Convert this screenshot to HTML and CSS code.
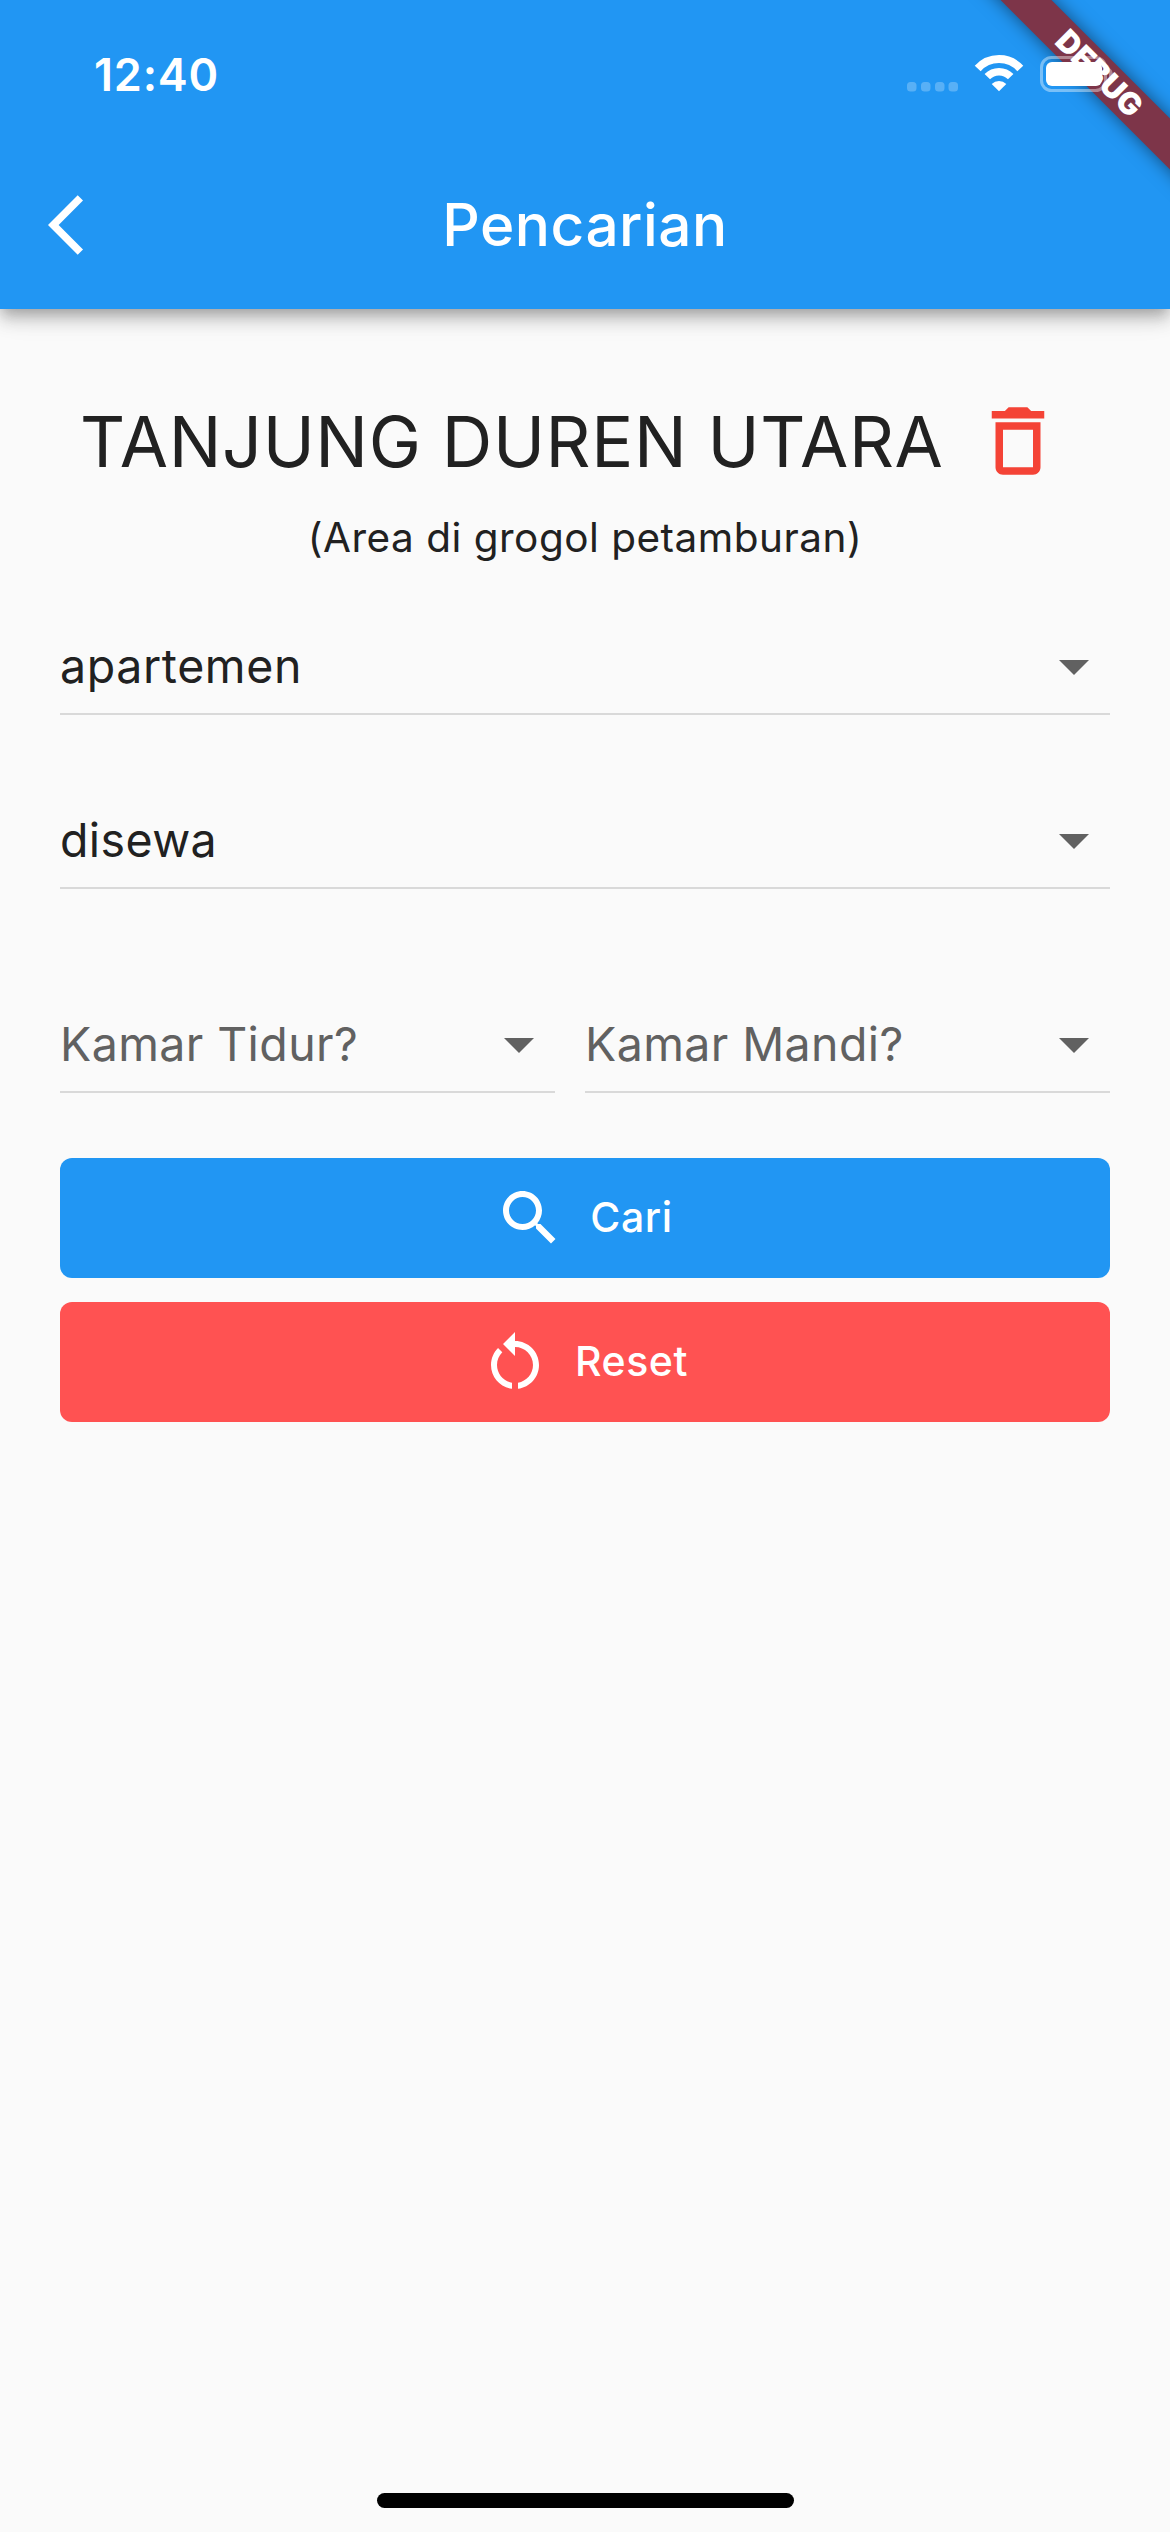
FILE: index.html
```
<!DOCTYPE html>
<html lang="id">
<head>
    <meta charset="UTF-8">
    <meta name="viewport" content="width=device-width, initial-scale=1.0">
    <title>Pencarian</title>
    <link rel="stylesheet" href="styles.css">
</head>
<body>
    <header>
        <div class="debug-banner"><span>DEBUG</span></div>

        <div class="status-bar">
            <span class="time">12:40</span>
            <div class="status-icons">
                <svg class="signal" width="52" height="10" viewBox="0 0 52 10">
                    <rect x="1" y="0" width="9.5" height="9.5" rx="3.5"/>
                    <rect x="15" y="0" width="9.5" height="9.5" rx="3.5"/>
                    <rect x="29" y="0" width="9.5" height="9.5" rx="3.5"/>
                    <rect x="42.5" y="0" width="9.5" height="9.5" rx="3.5"/>
                </svg>
                <svg class="wifi" width="50" height="37" viewBox="0 0 50 37">
                    <path d="M3.7 13.5A28.7 28.7 0 0 1 46.3 13.5" fill="none" stroke="#fff" stroke-width="8"/>
                    <path d="M13.3 21.7A16.3 16.3 0 0 1 36.7 21.7" fill="none" stroke="#fff" stroke-width="7.6"/>
                    <path d="M17.7 28.9A10.5 10.5 0 0 1 32.3 28.9L25 36.2z" fill="#fff"/>
                </svg>
                <svg class="battery" width="74" height="36" viewBox="0 0 74 36">
                    <rect x="1.5" y="1.5" width="64" height="33" rx="10" fill="none" stroke="#fff" stroke-opacity=".4" stroke-width="3"/>
                    <rect x="6" y="6" width="56" height="24" rx="6" fill="#fff"/>
                    <path d="M69 12c5 2 5 10 0 12z" fill="#fff" fill-opacity=".4"/>
                </svg>
            </div>
        </div>

        <div class="app-bar">
            <svg class="back" width="72" height="72" viewBox="0 0 24 24">
                <path d="M11.67 3.87L9.9 2.1 0 12l9.9 9.9 1.77-1.77L3.54 12z"/>
            </svg>
            <h1>Pencarian</h1>
        </div>
    </header>

    <main>
        <div class="area">
            <h2>TANJUNG DUREN UTARA</h2>
            <svg class="delete" width="90" height="90" viewBox="0 0 24 24">
                <path d="M6 19c0 1.1.9 2 2 2h8c1.1 0 2-.9 2-2V7H6v12zM8 9h8v10H8V9zm7.5-5l-1-1h-5l-1 1H5v2h14V4h-3.5z"/>
            </svg>
        </div>
        <p class="area-note">(Area di grogol petamburan)</p>

        <div class="select type">
            <span>apartemen</span>
            <svg width="72" height="72" viewBox="0 0 24 24"><path d="M7 10l5 5 5-5z"/></svg>
        </div>

        <div class="select status">
            <span>disewa</span>
            <svg width="72" height="72" viewBox="0 0 24 24"><path d="M7 10l5 5 5-5z"/></svg>
        </div>

        <div class="rooms">
            <div class="select hint bedroom">
                <span>Kamar Tidur?</span>
                <svg width="72" height="72" viewBox="0 0 24 24"><path d="M7 10l5 5 5-5z"/></svg>
            </div>
            <div class="select hint bathroom">
                <span>Kamar Mandi?</span>
                <svg width="72" height="72" viewBox="0 0 24 24"><path d="M7 10l5 5 5-5z"/></svg>
            </div>
        </div>

        <div class="buttons">
            <button class="search">
                <svg width="72" height="72" viewBox="0 0 24 24">
                    <path d="M15.5 14h-.79l-.28-.27C15.41 12.59 16 11.11 16 9.5 16 5.91 13.09 3 9.5 3S3 5.91 3 9.5 5.91 16 9.5 16c1.61 0 3.09-.59 4.23-1.57l.27.28v.79l5 4.99L20.49 19l-4.99-5zm-6 0C7.01 14 5 11.99 5 9.5S7.01 5 9.5 5 14 7.01 14 9.5 11.99 14 9.5 14z"/>
                </svg>
                <span>Cari</span>
            </button>
            <button class="reset">
                <svg width="72" height="72" viewBox="0 0 24 24">
                    <path d="M12 5V2L8 6l4 4V7c3.31 0 6 2.69 6 6 0 2.97-2.17 5.43-5 5.91v2.02c3.95-.49 7-3.85 7-7.93 0-4.42-3.58-8-8-8zm-6 8c0-1.65.67-3.15 1.76-4.24L6.34 7.34C4.9 8.79 4 10.79 4 13c0 4.08 3.05 7.44 7 7.93v-2.02c-2.83-.48-5-2.94-5-5.91z"/>
                </svg>
                <span>Reset</span>
            </button>
        </div>
    </main>

    <div class="home-indicator"></div>
</body>
</html>
```
FILE: styles.css
```
* {
    box-sizing: border-box;
}

body {
    font-family: Inter, "Liberation Sans", sans-serif;
    background-color: #fafafa;
    color: #212121;
    margin: 0;
    min-height: 2532px;
    display: flex;
    flex-direction: column;
}

header {
    position: relative;
    height: 309px;
    background-color: #2196f3;
    color: #fff;
    box-shadow: 0 6px 12px -3px rgba(0, 0, 0, 0.2), 0 12px 15px rgba(0, 0, 0, 0.14), 0 3px 30px rgba(0, 0, 0, 0.12);
}

.status-bar {
    position: relative;
    height: 141px;
    padding: 55px 56px 0 94px;
    display: flex;
    justify-content: space-between;
    align-items: flex-start;
}

.time {
    font-size: 45px;
    font-weight: 600;
    line-height: 39px;
    letter-spacing: 0.8px;
}

.status-icons {
    display: flex;
    align-items: flex-end;
    gap: 16px;
    height: 37px;
}

.signal {
    fill: rgba(255, 255, 255, 0.25);
}

.debug-banner {
    position: absolute;
    top: 0;
    right: 0;
    width: 260px;
    height: 260px;
    overflow: hidden;
}

.debug-banner span {
    position: absolute;
    top: 54px;
    left: 8px;
    width: 360px;
    height: 36px;
    line-height: 36px;
    text-align: center;
    text-indent: 4px;
    font-size: 31px;
    font-weight: 900;
    background-color: #7d3549;
    box-shadow: 0 0 18px rgba(0, 0, 0, 0.5);
    transform: rotate(45deg);
}

.app-bar {
    height: 168px;
    padding: 0 48px;
    display: flex;
    align-items: center;
}

.back {
    fill: #fff;
}

.app-bar h1 {
    flex: 1;
    margin: 0 72px 0 0;
    text-align: center;
    font-size: 58.5px;
    font-weight: 500;
    line-height: 72px;
    letter-spacing: 0.5px;
}

main {
    padding: 87px 60px 0;
}

.area {
    display: flex;
    align-items: center;
    justify-content: space-between;
    height: 90px;
    padding: 0 47px 0 20px;
}

.area h2 {
    margin: 0;
    padding-top: 2px;
    font-size: 70px;
    font-weight: 400;
    line-height: 90px;
    letter-spacing: 0.6px;
    white-space: nowrap;
}

.delete {
    fill: #f44336;
}

.area-note {
    margin: 26px 0 67px;
    text-align: center;
    font-size: 40.5px;
    line-height: 51px;
    letter-spacing: 0.5px;
}

.select {
    display: flex;
    align-items: center;
    justify-content: space-between;
    height: 85px;
    padding-bottom: 11px;
    border-bottom: 2px solid #d9d9d9;
    font-size: 46.5px;
    line-height: 72px;
    letter-spacing: 0.4px;
    white-space: nowrap;
}

.select svg {
    fill: #616161;
}

.type {
    letter-spacing: 0.6px;
}

.status {
    margin-top: 89px;
}

.rooms {
    display: flex;
    gap: 30px;
    margin-top: 119px;
}

.hint {
    color: #616161;
}

.bedroom {
    width: 495px;
}

.bathroom {
    width: 525px;
}

.buttons {
    display: flex;
    flex-direction: column;
    gap: 24px;
    margin-top: 65px;
}

.buttons button {
    display: flex;
    align-items: center;
    justify-content: center;
    gap: 24px;
    height: 120px;
    padding: 0 3px 0 0;
    border: none;
    border-radius: 12px;
    color: #fff;
    font-family: inherit;
    font-size: 41px;
    font-weight: 500;
    line-height: 46px;
    letter-spacing: 0.6px;
    cursor: pointer;
}

.buttons svg {
    fill: #fff;
}

.buttons span {
    margin-top: -2px;
}

.buttons .search {
    background-color: #2196f3;
}

.buttons .reset {
    background-color: #ff5252;
}

.home-indicator {
    width: 417px;
    height: 15px;
    margin: auto auto 24px;
    border-radius: 8px;
    background-color: #000;
}
```
